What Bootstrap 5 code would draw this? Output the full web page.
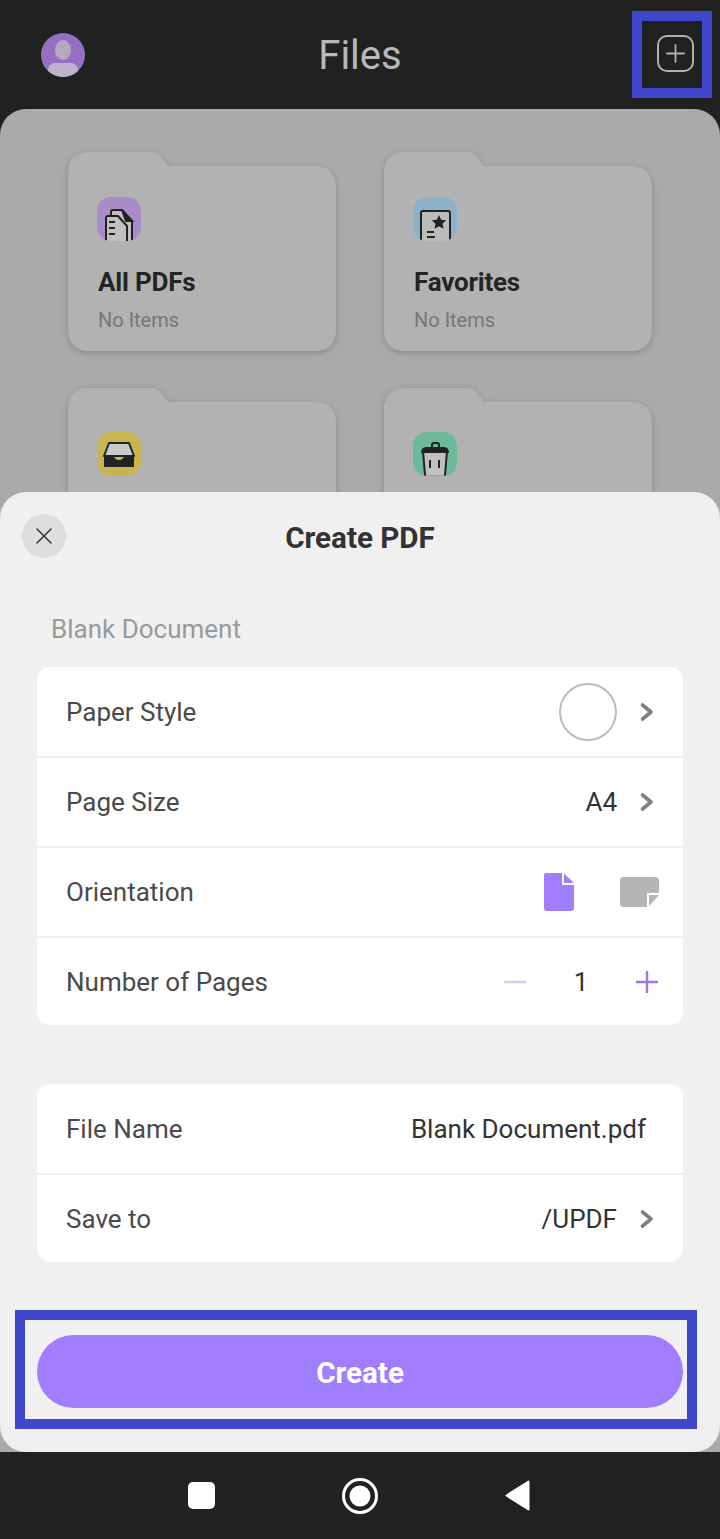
<!DOCTYPE html>
<html lang="en">
<head>
<meta charset="utf-8">
<title>Create PDF</title>
<link rel="stylesheet" href="https://cdn.jsdelivr.net/npm/bootstrap@5.3.0/dist/css/bootstrap.min.css">
<style>
html,body{height:100%;margin:0}
body{font-family:Roboto,"Liberation Sans",sans-serif;background:#212121;color:#4a4a4a}
.app-screen{position:relative;width:720px;height:1539px;overflow:hidden;background:#212121}
.top-bar{height:109px}
.side-box{width:120px;flex:none}
.side-left{padding-left:41px}
.side-right{padding-right:26px;margin-top:-3px}
.app-title{font-size:40px;line-height:44px;padding-top:2px;color:#b8b8b8;font-weight:400}
.back-area{position:relative;height:1343px;background:#aaaaaa;border-radius:26px 26px 0 0;overflow:hidden}
.folder-grid{display:grid;grid-template-columns:268px 268px;column-gap:48px;row-gap:37px;justify-content:center;padding-top:43px}
.folder-item{position:relative;height:199px;padding:45px 29px 0}
.folder-low{padding-top:44px}
.folder-bg{position:absolute;left:0;top:0;z-index:0;overflow:visible;filter:drop-shadow(0 2px 3px rgba(0,0,0,.2))}
.folder-item>div,.folder-item>.badge-icon{position:relative;z-index:1}
.badge-icon{display:block}
.folder-name{font-size:26px;line-height:32px;font-weight:700;color:#242424;margin:25px 0 0 1px;letter-spacing:-.2px}
.folder-count{font-size:20px;line-height:24px;color:#777;margin:10px 0 0 1px}
.sheet{position:absolute;left:0;right:0;bottom:0;height:960px;background:#f0f0f0;border-radius:26px;padding-top:22px}
.close-wrap{padding-left:22px}
.close-round{width:44px;height:44px;background:#dedede;border:0;padding:0}
.sheet-title{font-size:29.600px;line-height:40px;padding-top:4px;font-weight:700;color:#333;margin:0}
.section-hint{font-size:26px;line-height:40px;color:#999;margin:51px 0 18px 51px}
.setting-card{margin:0 37px;border-radius:14px;border:0;background:#fff;overflow:hidden}
.list-group-item.setting-row{height:90px;padding:0 24px 0 29px;border:0;border-top:2px solid #f0f0f0;font-size:26px;color:#4a4a4a;background:#fff}
.list-group-item.setting-row:first-child{height:89px;border-top:0}
.list-group-item.setting-row:last-child{height:89px}
.setting-row:first-child .row-text,.setting-row:last-child .row-text{padding-top:2px}
.row-value{font-size:26px;color:#333}
.gap-value{gap:18px}
.paper-dot{width:58px;height:58px;border:2px solid #bcbcbc;border-radius:50%}
.gap-orient{gap:46px}
.step-num{width:108px;text-align:center}
.file-value{margin-right:13px}
.second-card{margin-top:59px}
.go-btn{display:block;width:646px;height:73px;margin:73px 37px 0;border-radius:37px;background:#a17dff;border:0;color:#fff;font-size:29.600px;font-weight:700;line-height:69px;padding:4px 0 0}
.sys-nav{height:87px;gap:127px;padding-right:2px}
.mark-box{position:absolute;border:10px solid #3f48cc;pointer-events:none}
.mark-plus{left:632px;top:11px;width:80px;height:87px}
.mark-go{left:15px;top:1310px;width:682px;height:119px}
</style>
</head>
<body>
<div class="app-screen d-flex flex-column">
  <header class="top-bar d-flex align-items-center">
    <div class="side-box side-left">
      <svg width="44" height="44" viewBox="0 0 44 44" class="d-block"><defs><clipPath id="av"><circle cx="22" cy="22" r="22"/></clipPath></defs><circle cx="22" cy="22" r="22" fill="#9570c2"/><g clip-path="url(#av)"><ellipse cx="22" cy="17" rx="8" ry="10" fill="#b4a9c0"/><path d="M7 36a7 7 0 0 1 7-6h16a7 7 0 0 1 7 6v10H7z" fill="#bdb2c9"/></g></svg>
    </div>
    <div class="flex-grow-1 text-center app-title">Files</div>
    <div class="side-box side-right d-flex justify-content-end">
      <svg width="37" height="37" viewBox="0 0 37 37" fill="none" stroke="#b0b0b0" stroke-linecap="round"><rect x="1" y="1" width="35" height="35" rx="9" stroke-width="2"/><path d="M18.500 10v17M10 18.500h17" stroke-width="1.800"/></svg>
    </div>
  </header>

  <main class="back-area">
    <div class="folder-grid">
      <div class="folder-item">
        <svg class="folder-bg" width="268" height="199" viewBox="0 0 268 199"><path d="M0 22Q0 0 22 0H84Q90 0 94 6L100 14H246Q268 14 268 36V177Q268 199 246 199H22Q0 199 0 177Z" fill="#b2b2b2"/></svg>
        <svg class="badge-icon" width="44" height="44" viewBox="0 0 44 44"><defs><clipPath id="b1"><rect width="44" height="44" rx="14"/></clipPath></defs><rect width="44" height="44" rx="14" fill="#a88bc8"/><g clip-path="url(#b1)" stroke="#222" stroke-width="2" fill="#c0c0c0"><path d="M14 46V15a2 2 0 0 1 2-2H25L35 24V46Z"/><path d="M25 13L35 24H29Z" fill="#222"/><path d="M9 46V21a2 2 0 0 1 2-2H21L30 29V46Z"/><path d="M12 25h6M12 31h6M12 37h6" fill="none"/></g></svg>
        <div class="folder-name">All PDFs</div>
        <div class="folder-count">No Items</div>
      </div>
      <div class="folder-item">
        <svg class="folder-bg" width="268" height="199" viewBox="0 0 268 199"><path d="M0 22Q0 0 22 0H84Q90 0 94 6L100 14H246Q268 14 268 36V177Q268 199 246 199H22Q0 199 0 177Z" fill="#b2b2b2"/></svg>
        <svg class="badge-icon" width="44" height="44" viewBox="0 0 44 44"><defs><clipPath id="b2"><rect width="44" height="44" rx="14"/></clipPath></defs><rect width="44" height="44" rx="14" fill="#8fb0c9"/><g clip-path="url(#b2)"><path d="M8 47V16a2 2 0 0 1 2-2H35a2 2 0 0 1 2 2V47Z" fill="#bcbcbc" stroke="#222" stroke-width="2"/><path d="M26 18l2.200 4.700 5 .6-3.700 3.400 1 5L26 29.200 21.500 31.700l1-5-3.700-3.400 5-.6Z" fill="#222"/><path d="M14 35h7M14 40h8" stroke="#222" stroke-width="2" fill="none"/></g></svg>
        <div class="folder-name">Favorites</div>
        <div class="folder-count">No Items</div>
      </div>
      <div class="folder-item folder-low">
        <svg class="folder-bg" width="268" height="199" viewBox="0 0 268 199"><path d="M0 22Q0 0 22 0H84Q90 0 94 6L100 14H246Q268 14 268 36V177Q268 199 246 199H22Q0 199 0 177Z" fill="#b2b2b2"/></svg>
        <svg class="badge-icon" width="44" height="44" viewBox="0 0 44 44"><rect width="44" height="44" rx="14" fill="#c9b452"/><path d="M12 11H32L37 24H7Z" fill="#c8c8c8" stroke="#222" stroke-width="2" stroke-linejoin="round"/><path d="M7 23H16Q18 28 22 28Q26 28 28 23H37V35H7Z" fill="#222"/></svg>
      </div>
      <div class="folder-item folder-low">
        <svg class="folder-bg" width="268" height="199" viewBox="0 0 268 199"><path d="M0 22Q0 0 22 0H84Q90 0 94 6L100 14H246Q268 14 268 36V177Q268 199 246 199H22Q0 199 0 177Z" fill="#b2b2b2"/></svg>
        <svg class="badge-icon" width="44" height="44" viewBox="0 0 44 44"><defs><clipPath id="b4"><rect width="44" height="44" rx="14"/></clipPath></defs><rect width="44" height="44" rx="14" fill="#6dba9b"/><g clip-path="url(#b4)"><path d="M10 19L12 43H32L34 19Z" fill="#c0c0c0"/><path d="M10 19L12 43M34 19L32 43" fill="none" stroke="#222" stroke-width="2" stroke-linecap="round"/><path d="M19 16v-3a2 2 0 0 1 2-2h3a2 2 0 0 1 2 2v3" fill="none" stroke="#222" stroke-width="2"/><path d="M8 21q0-6 5-6H31q5 0 5 6Z" fill="#222"/><path d="M17 28v8M26 28v8" stroke="#222" stroke-width="2"/></g></svg>
      </div>
    </div>

    <section class="sheet">
      <div class="d-flex align-items-center">
        <div class="side-box close-wrap">
          <button type="button" class="close-round rounded-circle d-flex align-items-center justify-content-center" aria-label="Close">
            <svg width="18" height="18" viewBox="0 0 18 18" stroke="#3a3a3a" stroke-width="1.600" stroke-linecap="round"><path d="M2 2l14 14M16 2L2 16"/></svg>
          </button>
        </div>
        <h2 class="flex-grow-1 text-center sheet-title">Create PDF</h2>
        <div class="side-box"></div>
      </div>

      <div class="section-hint">Blank Document</div>

      <ul class="list-group setting-card">
        <li class="list-group-item setting-row d-flex align-items-center justify-content-between">
          <span class="row-text">Paper Style</span>
          <span class="d-flex align-items-center gap-value"><span class="paper-dot d-block"></span>
            <svg width="24" height="24" viewBox="0 0 24 24" fill="none" stroke="#808080" stroke-width="3.600" stroke-linecap="round" stroke-linejoin="round"><path d="M7.500 5L16 12L7.500 19"/></svg></span>
        </li>
        <li class="list-group-item setting-row d-flex align-items-center justify-content-between">
          <span class="row-text">Page Size</span>
          <span class="d-flex align-items-center gap-value"><span class="row-value row-text">A4</span>
            <svg width="24" height="24" viewBox="0 0 24 24" fill="none" stroke="#808080" stroke-width="3.600" stroke-linecap="round" stroke-linejoin="round"><path d="M7.500 5L16 12L7.500 19"/></svg></span>
        </li>
        <li class="list-group-item setting-row d-flex align-items-center justify-content-between">
          <span class="row-text">Orientation</span>
          <span class="d-flex align-items-center gap-orient">
            <svg width="30" height="38" viewBox="0 0 30 38"><path d="M2 0H18V12H30V35a3 3 0 0 1-3 3H3a3 3 0 0 1-3-3V2a2 2 0 0 1 2-2Z" fill="#a17dff"/><path d="M20 0.500L30 10H20Z" fill="#a17dff"/></svg>
            <svg width="39" height="30" viewBox="0 0 39 30"><path d="M4 0H35a4 4 0 0 1 4 4V16H27V30H4a4 4 0 0 1-4-4V4a4 4 0 0 1 4-4Z" fill="#b5b5b5"/><path d="M29 18H39L29 29Z" fill="#b5b5b5"/></svg>
          </span>
        </li>
        <li class="list-group-item setting-row d-flex align-items-center justify-content-between">
          <span class="row-text">Number of Pages</span>
          <span class="d-flex align-items-center">
            <svg width="24" height="24" viewBox="0 0 24 24"><path d="M1 12h22" stroke="#d6c8f3" stroke-width="2.400"/></svg>
            <span class="row-value row-text step-num">1</span>
            <svg width="24" height="24" viewBox="0 0 24 24"><path d="M1 12h22M12 1v22" stroke="#9a78ec" stroke-width="2.400"/></svg>
          </span>
        </li>
      </ul>

      <ul class="list-group setting-card second-card">
        <li class="list-group-item setting-row d-flex align-items-center justify-content-between">
          <span class="row-text">File Name</span>
          <span class="row-value row-text file-value">Blank Document.pdf</span>
        </li>
        <li class="list-group-item setting-row d-flex align-items-center justify-content-between">
          <span class="row-text">Save to</span>
          <span class="d-flex align-items-center gap-value"><span class="row-value row-text">/UPDF</span>
            <svg width="24" height="24" viewBox="0 0 24 24" fill="none" stroke="#808080" stroke-width="3.600" stroke-linecap="round" stroke-linejoin="round"><path d="M7.500 5L16 12L7.500 19"/></svg></span>
        </li>
      </ul>

      <button type="button" class="btn go-btn">Create</button>
    </section>
  </main>

  <nav class="sys-nav d-flex align-items-center justify-content-center">
    <svg width="27" height="27" viewBox="0 0 27 27"><rect width="27" height="27" rx="5" fill="#fff"/></svg>
    <svg width="36" height="36" viewBox="0 0 36 36"><circle cx="18" cy="18" r="16.500" fill="none" stroke="#fff" stroke-width="3"/><circle cx="18" cy="18" r="10.500" fill="#fff"/></svg>
    <svg width="25" height="31" viewBox="0 0 25 31"><path d="M23.500 1.500V29.500L1.500 15.500Z" fill="#fff" stroke="#fff" stroke-width="2" stroke-linejoin="round"/></svg>
  </nav>

  <div class="mark-box mark-plus"></div>
  <div class="mark-box mark-go"></div>
</div>
<script src="https://cdn.jsdelivr.net/npm/bootstrap@5.3.0/dist/js/bootstrap.bundle.min.js"></script>
</body>
</html>
